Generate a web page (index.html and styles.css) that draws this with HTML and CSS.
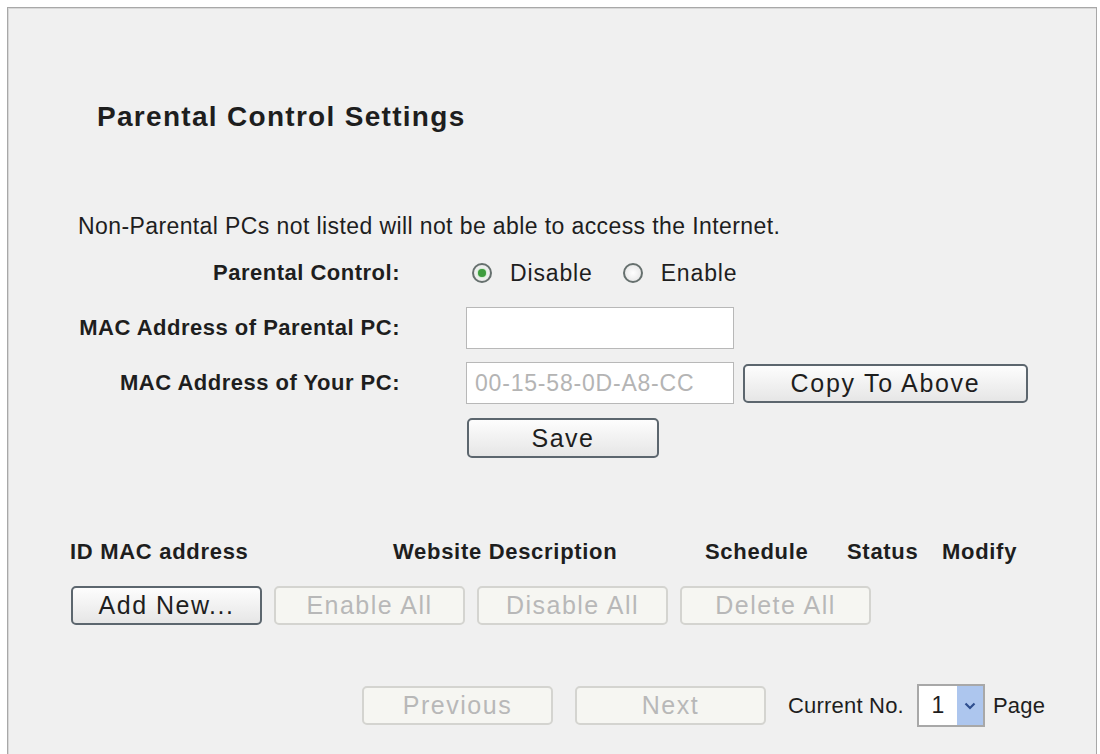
FILE: index.html
```html
<!DOCTYPE html>
<html lang="en">
  <head>
    <meta charset="UTF-8" />
    <meta name="viewport" content="width=device-width, initial-scale=1.0" />
    <title>Parental Control Settings</title>
    <link rel="stylesheet" href="styles.css">
  </head>

  <body>
    <div class="panel">
      <h1 class="title">Parental Control Settings</h1>

      <p class="intro">Non-Parental PCs not listed will not be able to access the Internet.</p>

      <div class="form">
        <label class="label">Parental Control:</label>
        <div class="field radios">
          <span class="radio checked"></span><span class="radio-text">Disable</span>
          <span class="radio"></span><span class="radio-text">Enable</span>
        </div>

        <label class="label">MAC Address of Parental PC:</label>
        <div class="field">
          <input class="text-input" type="text" />
        </div>

        <label class="label">MAC Address of Your PC:</label>
        <div class="field">
          <input class="text-input" type="text" placeholder="00-15-58-0D-A8-CC" />
          <button class="btn btn-copy">Copy To Above</button>
        </div>

        <span></span>
        <div class="field">
          <button class="btn btn-save">Save</button>
        </div>
      </div>

      <div class="list-head">
        <span>ID MAC address</span>
        <span>Website Description</span>
        <span>Schedule</span>
        <span>Status</span>
        <span>Modify</span>
      </div>

      <div class="list-actions">
        <button class="btn">Add New...</button>
        <button class="btn" disabled>Enable All</button>
        <button class="btn" disabled>Disable All</button>
        <button class="btn" disabled>Delete All</button>
      </div>

      <div class="pager">
        <button class="btn" disabled>Previous</button>
        <button class="btn" disabled>Next</button>
        <span class="pager-text">Current No.</span>
        <span class="select">
          <span class="select-value">1</span>
          <span class="select-arrow">
            <svg width="12" height="8" viewBox="0 0 12 8"><path d="M1.5 1.5 L6 6 L10.5 1.5" fill="none" stroke="#2f4f8f" stroke-width="2.2"/></svg>
          </span>
        </span>
        <span class="pager-text">Page</span>
      </div>
    </div>
  </body>
</html>
```

FILE: styles.css
```css
* {
  margin: 0;
  padding: 0;
  box-sizing: border-box;
}
:root {
  --panel-background: #f0f0f0;
  --panel-border: #a8a8a8;
  --text-color: #1e1e1e;
  --muted-color: #b4b4b4;
}
body {
  background-color: #fff;
  color: var(--text-color);
  font-family: "Liberation Sans", Arial, sans-serif;
  font-size: 23px;
  width: 100vw;
  height: 100vh;
  overflow: hidden;
}
.panel {
  margin: 7px 3px 0 7px;
  height: 800px;
  background-color: var(--panel-background);
  border: 1px solid var(--panel-border);
  border-bottom: none;
  box-shadow: inset 1px 1px 0 #d8d8d8;
  padding-top: 93px;
  overflow: hidden;
}
.title {
  font-size: 28px;
  font-weight: bold;
  line-height: 32px;
  letter-spacing: 1.3px;
  padding-left: 89px;
}
.intro {
  margin-top: 80px;
  padding-left: 70px;
  line-height: 26px;
  letter-spacing: 0.4px;
}
.form {
  display: grid;
  grid-template-columns: 392px 1fr;
  column-gap: 66px;
  row-gap: 13px;
  margin-top: 13px;
}
.form .label {
  font-size: 22px;
  font-weight: bold;
  text-align: right;
  align-self: center;
  letter-spacing: 0.5px;
}
.form .field {
  display: flex;
  align-items: center;
  height: 42px;
}
.radios {
  padding-left: 6px;
}
.radio {
  width: 20px;
  height: 20px;
  border-radius: 50%;
  border: 2px solid #66706e;
  background: radial-gradient(circle, #fff 0, #e2e2e2 100%);
  display: flex;
  align-items: center;
  justify-content: center;
  margin-right: 18px;
}
.radio.checked::after {
  content: "";
  width: 8px;
  height: 8px;
  border-radius: 50%;
  background-color: #3e9c3e;
  box-shadow: 0 0 2px #6fcf6f;
}
.radio-text {
  margin-right: 30px;
  letter-spacing: 0.85px;
}
.text-input {
  width: 268px;
  height: 42px;
  border: 1px solid #b8b8b8;
  background-color: #fff;
  font: inherit;
  padding: 0 8px;
  color: var(--text-color);
}
.text-input::placeholder {
  color: var(--muted-color);
  letter-spacing: 0.8px;
}
.btn {
  height: 39px;
  width: 190px;
  font: inherit;
  font-size: 25px;
  letter-spacing: 1.5px;
  color: var(--text-color);
  border: 2px solid #5c666e;
  border-radius: 5px;
  background: linear-gradient(#fdfdfd, #e6e6e6);
}
.btn:disabled {
  color: #b8b8b8;
  border: 2px solid #d4d4d0;
  background: #f6f6f2;
}
.btn-copy {
  width: 285px;
  margin-left: 9px;
  letter-spacing: 1.7px;
}
.btn-save {
  width: 192px;
  height: 40px;
  margin-left: 1px;
}
.list-head {
  display: grid;
  grid-template-columns: 323px 312px 142px 95px auto;
  margin-top: 80px;
  padding-left: 62px;
  line-height: 26px;
  font-size: 22px;
  font-weight: bold;
  letter-spacing: 0.7px;
}
.list-actions {
  display: flex;
  gap: 12px;
  margin-top: 21px;
  padding-left: 63px;
}
.list-actions .btn {
  width: 191px;
}
.pager {
  display: flex;
  align-items: center;
  margin-top: 59px;
  padding-left: 354px;
  width: 1040px;
  height: 43px;
  overflow: hidden;
}
.pager .btn {
  width: 191px;
  margin-right: 22px;
}
.pager-text {
  font-size: 22px;
  white-space: nowrap;
  letter-spacing: 0.2px;
}
.select {
  display: flex;
  height: 43px;
  margin: 0 8px 0 13px;
  border: 2px solid #a8a8a8;
  background-color: #fff;
}
.select-value {
  width: 38px;
  display: flex;
  align-items: center;
  justify-content: center;
}
.select-arrow {
  width: 26px;
  display: flex;
  align-items: center;
  justify-content: center;
  background-color: #adc6ee;
}
```
